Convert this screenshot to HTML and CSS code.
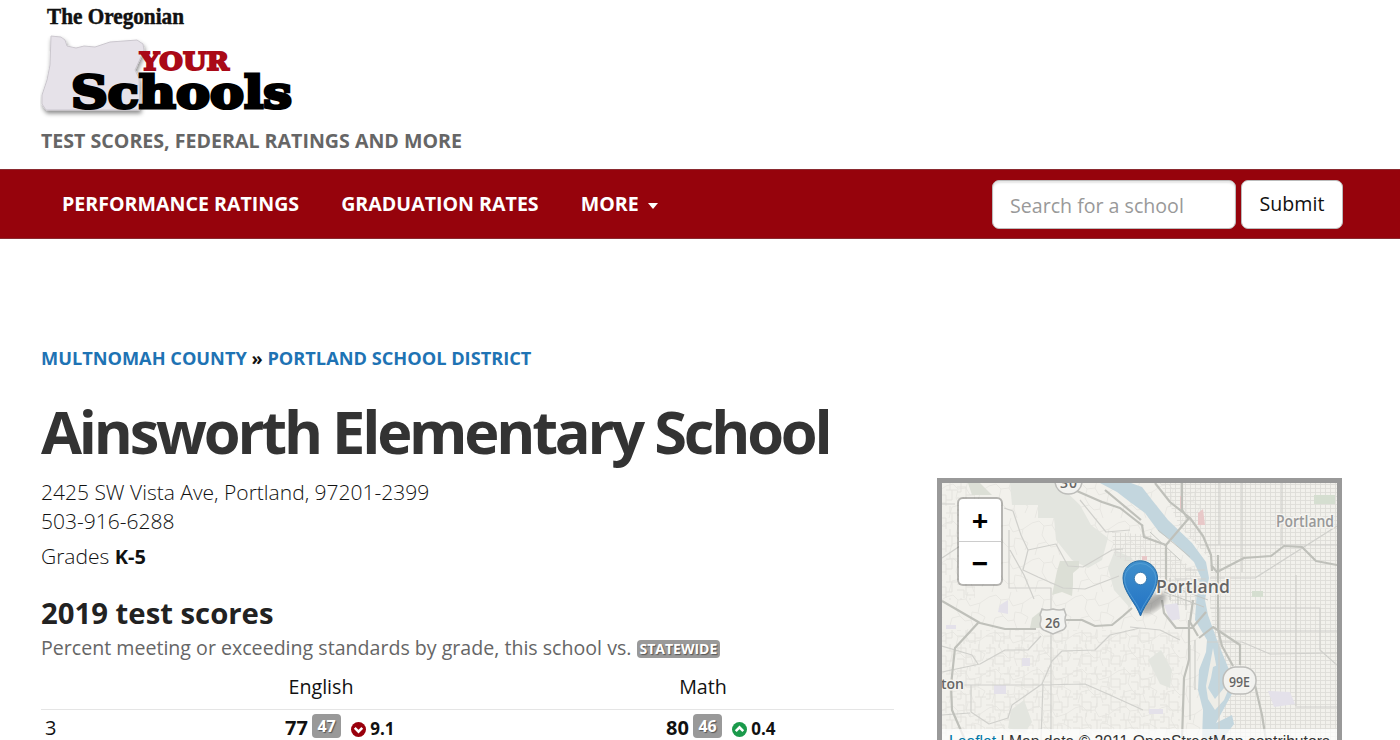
FILE: index.html
```html
<!DOCTYPE html>
<html lang="en">
<head>
<meta charset="utf-8">
<title>Ainsworth Elementary School</title>
<link rel="stylesheet" href="styles.css">
</head>
<body>
<header class="masthead">
  <svg class="logo" viewBox="40 0 256 120" width="256" height="120" role="img" aria-label="The Oregonian Your Schools">
    <defs><filter id="soft" x="-20%" y="-20%" width="140%" height="140%"><feDropShadow dx="1" dy="3" stdDeviation="2" flood-color="#000" flood-opacity=".45"/></filter></defs>
    <text class="logo-paper" x="47" y="24" textLength="137" lengthAdjust="spacingAndGlyphs">The Oregonian</text>
    <path class="logo-state" filter="url(#soft)" d="M51 36L61 37 65 40 67 46 76 48 84 46 95 47 110 42 137 40 143 44 144 50 140 59 135 70 139 78 140 110 46 110 42 104 42 95 47 80 50 65Z"/>
    <text class="logo-your" x="140" y="69.500" textLength="89" lengthAdjust="spacingAndGlyphs">YOUR</text>
    <text class="logo-schools" x="71" y="108" textLength="221" lengthAdjust="spacingAndGlyphs">Schools</text>
  </svg>
  <p class="tagline">TEST SCORES, FEDERAL RATINGS AND MORE</p>
</header>
<nav class="navbar">
  <a class="nav-link">PERFORMANCE RATINGS</a>
  <a class="nav-link">GRADUATION RATES</a>
  <a class="nav-link">MORE <i class="caret"></i></a>
  <form class="search">
    <input class="search-input" type="text" placeholder="Search for a school">
    <button class="search-button" type="button">Submit</button>
  </form>
</nav>
<main class="content">
  <section class="school">
    <p class="crumbs"><a>MULTNOMAH COUNTY</a> » <a>PORTLAND SCHOOL DISTRICT</a></p>
    <h1 class="name">Ainsworth Elementary School</h1>
    <p class="address">2425 SW Vista Ave, Portland, 97201-2399<br>503-916-6288</p>
    <p class="grades">Grades <b>K-5</b></p>
    <h2 class="scores-title">2019 test scores</h2>
    <p class="scores-note">Percent meeting or exceeding standards by grade, this school vs. <span class="label">STATEWIDE</span></p>
    <div class="table">
      <div class="row head"><span></span><span class="cell">English</span><span class="cell">Math</span></div>
      <div class="row data">
        <span class="grade">3</span>
        <span class="score"><b class="value">77</b><b class="badge">47</b>
          <svg class="arrow" viewBox="0 0 14 14"><circle cx="7" cy="7" r="7" fill="#99000c"/><path d="M3.500 5.500L7 9 10.500 5.500"/></svg><b class="change">9.1</b></span>
        <span class="score"><b class="value">80</b><b class="badge">46</b>
          <svg class="arrow" viewBox="0 0 14 14"><circle cx="7" cy="7" r="7" fill="#1a9a4b"/><path d="M3.500 8.500L7 5 10.500 8.500"/></svg><b class="change">0.4</b></span>
      </div>
    </div>
  </section>
  <aside class="map">
    <svg class="tiles" viewBox="942 483 395 257" width="395" height="257">
      <defs>
        <linearGradient id="pin" x1="0" y1="0" x2="0" y2="1"><stop offset="0" stop-color="#4090cc"/><stop offset="1" stop-color="#2272c4"/></linearGradient>
        <pattern id="grid" width="5" height="4" patternUnits="userSpaceOnUse"><path d="M0 .5H5M.5 0V4" stroke="#dedcd8" stroke-width=".9"/></pattern>
        <pattern id="lanes" width="29" height="23" patternUnits="userSpaceOnUse"><path d="M0 4H9V12H18V23M4 0V9M13 4V0M18 7H29M0 15H7V23M22 0V7M24 7V17H18M9 12V20H18M0 9H4" fill="none" stroke="#e4e3de" stroke-width="1"/></pattern>
        <pattern id="hills" width="43" height="37" patternUnits="userSpaceOnUse"><path d="M0 5L7 3 12 8 20 7 24 14 34 11 43 5M3 37L6 26 14 24 19 29 25 28 28 37M22 0L20 7M34 11L32 21 39 25 36 32M14 24L10 17 12 8M25 28L26 20 32 21" fill="none" stroke="#e8e7e2" stroke-width="1"/></pattern>
        <filter id="blur"><feGaussianBlur stdDeviation="2.500"/></filter>
      </defs>
      <rect x="942" y="483" width="395" height="257" fill="#f2f1ec"/>
      <rect x="942" y="483" width="260" height="257" fill="url(#hills)"/>
      <path d="M942 630H1180V740H942ZM942 483H975V600H942Z" fill="url(#lanes)"/>
      <g fill="#e3e5df">
        <path d="M1010 483H1057L1080 505 1091 525 1108 538 1102 560 1088 568 1072 560 1056 540 1054 518H1038V505H1012ZM1115 550L1132 558 1140 580 1130 608 1114 590 1108 568ZM1148 660L1161 650 1172 670 1170 688 1160 684ZM1011 710L1024 700 1032 722 1024 734 1008 728Z"/>
        <path fill="#dcdfd6" d="M1057 571L1060 561H1079V568L1073 573V585L1072 596 1062 592 1052 595ZM968 483H980L992 495H972ZM1032 618L1042 610V628H1030Z"/>
      </g>
      <path d="M1160 483H1337V740H1226L1216 660 1210 600 1211 560 1180 527ZM1112 532L1150 535 1200 575V605H1172L1160 580 1114 555Z" fill="url(#grid)"/>
      <path fill="#d5ded0" d="M1314 495H1335V504H1314ZM1252 591H1263V597H1252Z"/>
      <g fill="#e4e1ea"><path d="M1268 691L1290 692 1295 704 1274 707ZM1164 605L1178 603 1180 619 1170 621ZM994 685H1006V694H994ZM1022 658H1030V666H1022ZM1000 605L1008 600V614L998 612ZM1149 709H1163V714H1149ZM946 625H956V629H946Z"/></g>
      <path fill="#e8c8c8" d="M1198 513L1203 509 1205 525H1198ZM1180 496H1183V509H1180ZM1142 556H1147V560H1142Z"/>
      <path d="M1100 483H1131L1142 487 1152 500 1168 520 1192 543 1206 562 1209 578 1205 600 1208 615 1217 640 1223 655 1230 672 1233 692 1222 712 1216 723 1232 715 1234 724 1222 740H1202L1203 710 1198 690 1199 670 1206 652 1207 640 1195 620 1197 588 1201 578 1194 562 1172 541 1159 532 1145 513 1130 502 1117 492Z" fill="#c3d6de"/>
      <path d="M1213 648L1217 670 1229 688 1224 700 1215 710 1208 699 1206 686Z" fill="#eeede7"/><path d="M1213 667L1220 664 1223 676 1224 688 1215 699 1208 688 1211 678Z" fill="#c3d6de"/>
      <g class="roads minor">
        <path d="M942 504H955M1004 508L1013 511 1021 535 1028 550 1056 544 1068 566 1083 567 1112 550 1123 549M1028 550L1023 570 1038 577 1063 588 1085 589 1119 576M1009 530V588H1051V600M1010 550L1024 575 1034 599M1051 590V740M942 558L960 546M1200 545H1337M1219 483V545M1242 483V572M1282 483V545M1296 575V706M1219 608V740M1296 707H1337M1210 578H1255L1337 526M1210 608H1320V650L1337 665M1220 631H1337M942 685H1040L1085 684 1110 695 1143 710M942 672L980 664 1005 650 1028 650 1041 636M942 715L970 713M971 685V712L989 724 1008 718 1012 705 1042 684 1052 661 1062 651 1095 650 1110 635 1140 628M1043 684L1041 740M942 646L972 655 978 664M1185 570H1205M1175 579H1206M1207 642H1242L1270 654 1337 653M1130 627L1160 630 1180 640M1080 500L1106 532 1130 530"/>
      </g>
      <g class="roads">
        <path d="M1070 488L1102 502 1120 508 1143 526M1105 490L1141 520M1142 525L1144 537 1166 545M1155 483L1170 502 1190 518 1203 536 1211 555 1212 571M1182 483V510L1189 520M1189 518L1166 545V590M1211 565L1217 572 1244 558 1271 556 1284 546 1302 547 1316 561 1337 565M942 601L980 623 1005 629H1036M1066 620L1082 620 1095 626 1112 625 1123 616 1132 608M978 623L955 648 951 685 952 710 965 740M1162 600L1164 613 1176 628H1192L1206 612M1189 620V660L1184 678 1182 740M1218 555V630L1222 646 1233 666M1255 685L1262 715 1266 740M1199 638L1213 627 1240 645V665M1193 600L1190 622 1198 636"/>
      </g>
      <g class="fine"><path d="M1168 585L1208 600M1164 592L1204 607M1170 600V578M1178 605V580M1186 610V584M1190 645V720M1195 640V690M1150 532L1180 560M1158 530L1190 557"/></g>
      <ellipse cx="1153" cy="603" rx="15" ry="7" transform="rotate(-35 1153 603)" fill="#555" opacity=".45" filter="url(#blur)"/>
      <g class="shields"><rect x="1055" y="468" width="27" height="26" rx="13"/><path d="M1042 609Q1046 611 1053 609Q1060 611 1064 609L1066 615Q1064 618 1066 626Q1065 630 1060 631L1053 634 1046 631Q1040 629 1040 624Q1042 618 1040 615Z"/><rect x="1223" y="667" width="33" height="27" rx="13"/></g>
      <g class="map-text">
        <text x="1060" y="487.500" textLength="17" font-size="14">30</text>
        <text x="1045" y="627.500" textLength="15" font-size="14" lengthAdjust="spacingAndGlyphs">26</text>
        <text x="1229" y="686.500" textLength="21" font-size="14" lengthAdjust="spacingAndGlyphs">99E</text>
        <text x="1156" y="593" textLength="74" font-size="17.500">Portland</text>
        <text class="light" x="1276" y="526.500" textLength="58" font-size="15.500" lengthAdjust="spacingAndGlyphs">Portland</text>
        <text x="941" y="689" textLength="23" font-size="15" lengthAdjust="spacingAndGlyphs">ton</text>
      </g>
      <path d="M1140.500 616C1136 603 1123 592 1123 578A17 17 0 0 1 1157.500 578C1157.500 592 1145 603 1140.500 616Z" fill="url(#pin)" stroke="#286da5"/>
      <path d="M1140.500 612C1136 600 1124.500 591 1124.500 578A15.800 15.800 0 0 1 1156 578C1156 591 1145 600 1140.500 612Z" fill="none" stroke="#5da5d8" stroke-width="1" opacity=".7"/>
      <circle cx="1140.500" cy="578.500" r="6.200" fill="#fff" stroke="#286da5" stroke-width=".8"/>
    </svg>
    <div class="zoom"><a>+</a><a>−</a></div>
    <div class="credit"><a>Leaflet</a> | Map data © 2011 OpenStreetMap contributors</div>
  </aside>
</main>
</body>
</html>
```

FILE: styles.css
```css
* { box-sizing: border-box; }
body { height: 740px; margin: 0; background: #fff; color: #111; font-family: "Open Sans", sans-serif; font-size: 20px; line-height: 30px; }
p, h1, h2 { margin: 0; white-space: nowrap; }
.masthead { height: 169px; padding-left: 40px; }
.logo { display: block; }
.logo-paper { font: bold 23px "Liberation Serif", serif; fill: #111; stroke: #111; stroke-width: .5; }
.logo-state { fill: #e6e2e9; stroke: #cbc7ce; }
.logo-your { font: bold 24.500px "DejaVu Serif", serif; fill: #aa0a17; stroke: #aa0a17; stroke-width: 1.900; }
.logo-schools { font: bold 44px "DejaVu Serif", serif; fill: #000; stroke: #000; stroke-width: 3; }
.tagline { padding: 6px 0 0 1px; font-size: 19.600px; font-weight: 700; color: #666; }
.navbar { display: flex; align-items: center; height: 70px; padding: 0 57px 0 62px; background: #96030c; border: solid #8a2a30; border-width: 1px 0; }
.nav-link { display: flex; align-items: center; margin-right: 42px; padding-bottom: 1px; color: #fff; font-size: 19.600px; font-weight: 700; white-space: nowrap; }
.caret { margin: 4px 0 0 9px; border: 5.500px solid transparent; border-top: 6px solid #fff; border-bottom: 0; }
.search { display: flex; gap: 5px; margin-left: auto; }
.search-input, .search-button { height: 49px; border: 1px solid #bbb; border-radius: 7px; background: #fff; font: 19.600px "Open Sans", sans-serif; }
.search-input { width: 244px; padding: 2px 17px 0; box-shadow: inset 0 2px 2px rgba(0,0,0,.1); }
.search-input::placeholder { color: #999; opacity: 1; }
.search-button { width: 102px; padding: 0 0 1px; color: #111; }
.content { display: flex; justify-content: space-between; height: 501px; padding: 0 58px 0 41px; overflow: hidden; }
.school { width: 853px; padding-top: 104px; }
.crumbs { font-size: 18.200px; font-weight: 700; }
.crumbs a { color: #1e73b4; }
.name { margin-top: 22px; color: #333; font-size: 59.500px; line-height: 72px; letter-spacing: -3.200px; }
.address { margin-top: 11px; font-size: 21px; font-weight: 300; line-height: 29px; }
.grades { margin-top: 5px; font-size: 21px; font-weight: 300; }
.grades b { font-size: 20px; font-weight: 700; }
.scores-title { margin-top: 22px; color: #222; font-size: 29.300px; line-height: 38px; }
.scores-note { padding-top: 1px; color: #666; font-size: 19.600px; }
.label { display: inline-block; height: 18px; padding: 0 3px; border-radius: 4px; background: #999; color: #fff; font-size: 14px; font-weight: 700; line-height: 18px; text-shadow: 1px 1px 1px #555; vertical-align: 1px; }
.table { margin-top: 6px; }
.row { display: grid; grid-template-columns: 89px 382px 382px; }
.head { height: 41px; padding-top: 3px; border-bottom: 1px solid #e5e5e5; font-size: 19.700px; }
.cell { text-align: center; }
.data { padding-top: 3px; }
.grade { padding-left: 4px; }
.score { display: flex; padding-left: 155px; }
.score + .score { padding-left: 154px; }
.badge { height: 24px; margin: 1px 10px 0 4px; padding: 0 5.500px; border-radius: 4px; background: #999; color: #fff; font-size: 16px; line-height: 24px; text-shadow: 1px 1px 1px #555; }
.arrow { width: 15px; height: 15px; margin: 9px 4px 0 0; }
.arrow path { fill: none; stroke: #fff; stroke-width: 2.400; }
.change { padding-top: 1px; font-size: 17px; }
.map { position: relative; width: 405px; height: 262px; margin-top: 239px; border: 5px solid #999; border-bottom: 0; overflow: hidden; }
.tiles { display: block; }
.roads path { fill: none; stroke: #bfc0ba; stroke-width: 2.200; stroke-linejoin: round; }
.roads.minor path { stroke: #d0d0cc; stroke-width: 1.200; }
.fine path { fill: none; stroke: #c6c7c2; }
.shields { fill: #f2f2ef; stroke: #bdbdba; stroke-width: 1.500; }
.map-text { font-family: "Open Sans", sans-serif; font-weight: 600; fill: #666; stroke: #f5f4f0; stroke-width: 3; paint-order: stroke; }
.map-text .light { fill: #999; }
.zoom { position: absolute; top: 14px; left: 15px; width: 46px; height: 89px; border: 2px solid rgba(0,0,0,.25); border-radius: 6px; background: #fff; background-clip: padding-box; color: #000; }
.zoom a { display: block; height: 42px; font: bold 29px/42px "Open Sans", sans-serif; text-align: center; }
.zoom a:first-child { height: 43px; border-bottom: 1px solid #ccc; }
.credit { position: absolute; top: 246px; left: 0; width: 100%; height: 25px; padding-left: 7px; background: rgba(255,255,255,.7); color: #333; font: 15.700px/25px "Liberation Sans", sans-serif; white-space: nowrap; }
.credit a { color: #0078a8; }
```
